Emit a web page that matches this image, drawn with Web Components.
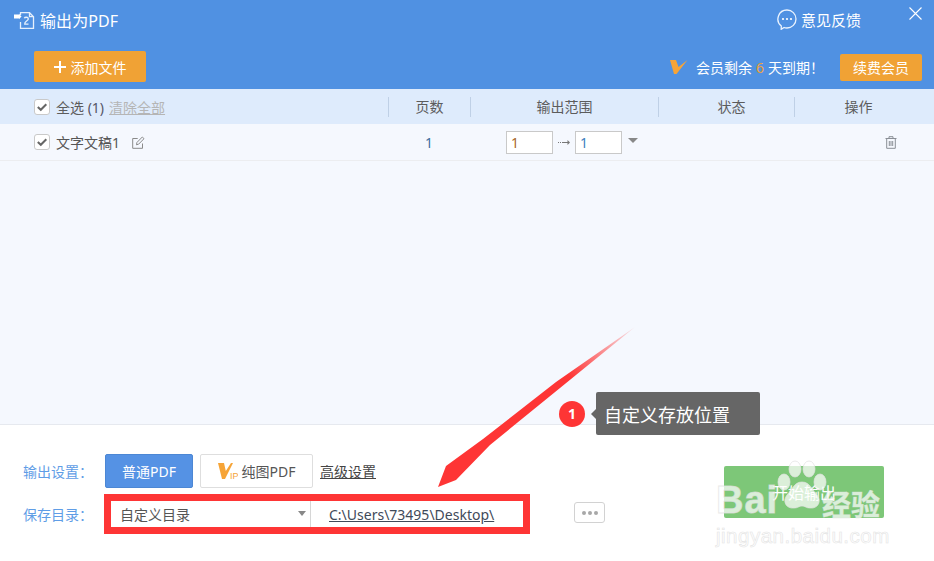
<!DOCTYPE html>
<html lang="zh"><head><meta charset="utf-8"><title>输出为PDF</title>
<style>
html,body{margin:0;padding:0}
body{width:934px;height:561px;overflow:hidden;background:#fff;font-family:"Noto Sans","Noto Sans CJK SC",sans-serif}
</style></head><body>
<pdf-window>
  <title-bar></title-bar>
  <tool-bar></tool-bar>
  <table-head></table-head>
  <file-row name="文字文稿1"></file-row>
  <empty-area></empty-area>
  <bottom-panel></bottom-panel>
  <note-overlay></note-overlay>
</pdf-window>
<script>
const FONT='"Noto Sans","Noto Sans CJK SC",sans-serif';
function def(name,html){
  customElements.define(name,class extends HTMLElement{
    connectedCallback(){
      if(this.shadowRoot)return;
      const r=this.attachShadow({mode:'open'});
      r.innerHTML=typeof html==='function'?html(this):html;
    }
  });
}
const CHECK=`<svg width="16" height="16" viewBox="0 0 16 16"><rect x=".5" y=".5" width="15" height="15" rx="2.5" fill="#fff" stroke="#c9c9c9"/><path d="M3.8 8l3 2.8L12.3 5.2" fill="none" stroke="#666" stroke-width="2"/></svg>`;
def('check-box',`<style>:host{display:block;width:16px;height:16px}svg{display:block}</style>${CHECK}`);
def('pdf-window',`<style>:host{display:flex;flex-direction:column;position:relative;width:934px;height:561px;font-family:${FONT};font-size:14px;color:#555}</style><slot></slot>`);
def('title-bar',`<style>
:host{display:flex;align-items:center;height:45px;background:#5091e2;color:#fff;padding:0 12px 6px 14px;box-sizing:border-box}
.t{font-size:16px;margin-left:4px;letter-spacing:.1px}
.fb{margin-left:auto;display:flex;align-items:center;gap:4px;font-size:15px;margin-right:48px}
svg{display:block;flex:none}
.x{margin-bottom:12px}
</style>
<svg width="22" height="20" viewBox="0 0 22 20" fill="none" stroke="#e6f0fc" stroke-width="1.3"><path d="M6.5 5V2.7h9l4 4v11.6H6.5V12"/><path d="M15.500 2.700v4h4"/><path d="M10.300 8.300c.6-1.500 3.800-1.500 4 .5.200 1.700-2.400 2-3.300 4l-.2 1.300h3.700"/><rect x="0" y="4.500" width="5" height="4" fill="#fff" stroke="none"/><path d="M5 3.800l2.500 2.700L5 9.200z" fill="#fff" stroke="none"/></svg>
<span class="t">输出为PDF</span>
<span class="fb"><svg width="20" height="21" viewBox="0 0 20 21" fill="none" stroke="#eaf3fe" stroke-width="1.3"><path d="M10 1a9 9 0 0 1 0 18c-1 0-2-.1-2.900-.5L4.200 20.300l.1-3.300A9 9 0 0 1 10 1z"/><g fill="#fff" stroke="none"><circle cx="6" cy="10" r="1.100"/><circle cx="10" cy="10" r="1.100"/><circle cx="14" cy="10" r="1.100"/></g></svg>意见反馈</span>
<svg class="x" width="13" height="13" viewBox="0 0 13 13" stroke="#fff" stroke-width="1.100"><path d="M.5.500l12 12M12.500.500l-12 12"/></svg>`);
def('tool-bar',`<style>
:host{display:flex;align-items:center;height:44px;background:#5091e2;color:#fff;padding:0 12px 0 34px;box-sizing:border-box}
.add{display:flex;align-items:center;justify-content:center;gap:5px;width:112px;height:31px;background:#f0a235;border-radius:2px;font-size:14px;margin-top:-1px}
.vip{margin-left:auto;display:flex;align-items:center;font-size:14px}
.vip b{font-weight:400;color:#f0a235;margin:0 4px}
.vip svg{margin-right:8px}
.renew{margin-left:16px;width:82px;height:27px;background:#f0a235;border-radius:2px;display:flex;align-items:center;justify-content:center;font-size:14px}
svg{display:block}
</style>
<span class="add"><svg width="12" height="12" viewBox="0 0 12 12"><path d="M6 0v12M0 6h12" stroke="#fff" stroke-width="2"/></svg>添加文件</span>
<span class="vip"><svg width="18" height="16" viewBox="0 0 18 16"><path d="M0 1h6l2.500 7L17.500 1 6.500 15H4z" fill="#f6a437"/></svg>会员剩余<b>6</b>天到期！</span>
<span class="renew">续费会员</span>`);
def('table-head',`<style>
:host{display:grid;grid-template-columns:388px 82px 188px 136px 128px;height:35px;background:#deebfc;align-items:center;box-sizing:border-box;color:#5c5c5c}
.c{height:20px;line-height:20px;text-align:center;border-left:1px solid #bfd0e6;box-sizing:border-box}
.f{display:flex;align-items:center;padding-left:34px;gap:6px}
.n{color:#556}
u{color:#b5b5b5;margin-left:-1px}
.s{padding-left:10px}
check-box{flex:none}
</style>
<div class="f"><check-box></check-box><span>全选 <span class="n">(1)</span></span><u>清除全部</u></div>
<div class="c">页数</div><div class="c">输出范围</div><div class="c s">状态</div><div class="c">操作</div>`);
def('file-row',h=>`<style>
:host{display:grid;grid-template-columns:388px 82px 188px 136px 128px;height:37px;background:#f5f8fe;align-items:center;box-sizing:border-box;border-bottom:1px solid #ecedf0;color:#555}
.f{display:flex;align-items:center;padding-left:34px}
.f span{margin-left:6px}
.f svg{margin-left:12px}
.p{text-align:center;color:#3f6f9f}
.r{display:flex;align-items:center;padding-left:36px}
.i{width:47px;height:23px;border:1px solid #c9c9c9;background:#fff;box-sizing:border-box;padding-left:4px;line-height:22px;color:#a8682c}
.i.b{color:#3f7fc0}
.r .a{width:22px;display:flex;justify-content:center}
.caret{width:0;height:0;border:5px solid transparent;border-top:5px solid #888;border-bottom:0;margin:-4px 0 0 6px}
.d{display:flex;justify-content:flex-end;padding-right:25px;grid-column:5}
svg{display:block}
check-box{flex:none}
</style>
<div class="f"><check-box></check-box><span>${h.getAttribute('name')}</span><svg width="13" height="13" viewBox="0 0 13 13" fill="none" stroke="#8a8a8a"><path d="M10.500 7.500v4.800H.7V2.500h5"/><path d="M4.500 8.800l.4-2.300L10.300 1l1.700 1.700-5.400 5.500z"/></svg></div>
<div class="p">1</div>
<div class="r"><span class="i">1</span><span class="a"><svg width="13" height="7" viewBox="0 0 13 7" stroke="#777" fill="none"><path d="M0 3.500h1M2 3.500h1M4 3.500h7"/><path d="M9.500 1l2.500 2.500L9.500 6" fill="#777" stroke="none"/></svg></span><span class="i b">1</span><span class="caret"></span></div>
<div></div>
<div class="d"><svg width="12" height="13" viewBox="0 0 12 13" fill="none" stroke="#8a8f96"><path d="M.5 2.500h11M4 2.500V.7h4v1.800M1.700 2.500v9.800h8.600V2.500M4.300 5v5M6 5v5M7.700 5v5"/></svg></div>`);
def('empty-area',`<style>:host{display:block;flex:1;background:#f5f8fe;border-bottom:1px solid #e6e9ef}</style>`);
def('pdf-btn',h=>`<style>
:host{display:flex;align-items:center;justify-content:center;height:34px;box-sizing:border-box;border-radius:2px;font-size:14px;gap:4px;
 ${h.hasAttribute('primary')?'background:#5592e4;color:#fff;border:1px solid #4c87d4;width:88px':'background:#fff;color:#555;border:1px solid #dedede;width:113px'}}
svg{display:block}
</style><slot></slot>`);
def('bottom-panel',`<style>
:host{display:flex;align-items:flex-start;height:136px;padding-top:29px;box-sizing:border-box;background:#fff;color:#555}
.l{width:530px;flex:none;padding-left:23px;box-sizing:border-box}
.row{display:flex;align-items:center}
.lb{color:#5f9de6;width:81px;flex:none;white-space:nowrap}
.gap{margin-left:7px}
u{margin-left:7px;color:#444}
.r2{margin-top:6px}
.dir{display:flex;width:426px;height:40px;box-sizing:border-box;border:7px solid #fe3535;background:#fff;align-items:center;margin-left:0}
.sel{width:200px;height:26px;border-right:1px solid #d6d6d6;box-sizing:border-box;display:flex;align-items:center;padding-left:9px;position:relative}
.sel i{position:absolute;right:4px;top:10px;width:0;height:0;border:4px solid transparent;border-top:5px solid #888;border-bottom:0}
.path{padding-left:18px;color:#3f4a5a;text-decoration:underline;white-space:nowrap}
.more{width:31px;height:21px;margin:48px 0 0 44px;flex:none;box-sizing:border-box;border:1px solid #d2d2d2;border-radius:3px;display:flex;align-items:center;justify-content:center;gap:2px}
.more i{width:4px;height:4px;border-radius:50%;background:#a8a8a8}
.go{width:160px;height:52px;margin:12px 0 0 119px;flex:none;background:#7dc778;border-radius:2px;color:#fff;font-size:16px;display:flex;align-items:center;justify-content:center}
svg{display:block}
</style>
<div class="l">
 <div class="row"><span class="lb" style="width:82px">输出设置：</span><pdf-btn primary>普通PDF</pdf-btn><pdf-btn class="gap"><svg width="20" height="18" viewBox="0 0 20 18"><path d="M0 1h6l1.800 8L13 1h2L7 17H4z" fill="#f6a437"/><text x="12" y="17" font-size="9" fill="#f6a437" font-family="Liberation Sans">IP</text></svg>纯图PDF</pdf-btn><u>高级设置</u></div>
 <div class="row r2"><span class="lb">保存目录：</span><div class="dir"><div class="sel">自定义目录<i></i></div><div class="path">C:\\Users\\73495\\Desktop\\</div></div></div>
</div>
<div class="more"><i></i><i></i><i></i></div>
<div class="go">开始输出</div>`.replace(/\\\\/g,'\\'));
def('note-overlay',`<style>
:host{display:block;position:absolute;inset:0;pointer-events:none;font-family:${FONT}}
.arrow{position:absolute;left:0;top:0}
.num{position:absolute;left:559px;top:401px;width:26px;height:26px;border-radius:50%;background:#fe3535;color:#fff;font-size:14px;font-weight:700;display:flex;align-items:center;justify-content:center;line-height:1}
.tip{position:absolute;left:596px;top:392px;width:164px;height:43px;background:#666;border-radius:2px;color:#fff;font-size:18px;display:flex;align-items:center;padding-left:8px;box-sizing:border-box;white-space:nowrap}
.tip:before{content:"";position:absolute;left:-5px;top:17px;border:5px solid transparent;border-right:5px solid #666;border-left:0}
.wm{position:absolute;left:716px;top:460px;width:170px;height:90px;color:rgba(255,255,255,.72);font-family:"Liberation Sans",sans-serif}
.bai{position:absolute;left:0;top:18px;font-size:38px;font-weight:700;line-height:44px;letter-spacing:1px;-webkit-text-stroke:1px rgba(225,225,225,.7)}
.jy{position:absolute;left:106px;top:26px;font:700 29px/34px "Noto Sans CJK SC",sans-serif;-webkit-text-stroke:.5px rgba(225,225,225,.7)}
.url{position:absolute;left:0;top:64px;font-size:20.500px;line-height:24px;letter-spacing:.5px;color:rgba(255,255,255,.9);-webkit-text-stroke:.6px #e4e4e4;white-space:nowrap}
.paw{position:absolute;left:58px;top:0}
</style>
<svg class="arrow" width="934" height="561" viewBox="0 0 934 561"><defs><linearGradient id="g" x1="635" y1="327" x2="570" y2="378" gradientUnits="userSpaceOnUse"><stop offset="0" stop-color="#fe3535" stop-opacity=".1"/><stop offset="1" stop-color="#fe3535"/></linearGradient></defs><path d="M635 327L560 388 L490 445 L456 480 L438 487 L446 466 L483 439 L556 382z" fill="url(#g)"/></svg>
<span class="num">1</span>
<div class="tip">自定义存放位置</div>
<div class="wm">
 <svg class="paw" width="56" height="54" viewBox="0 0 56 54" fill="rgba(255,255,255,.72)" stroke="rgba(225,225,225,.7)"><ellipse cx="10" cy="22" rx="6" ry="8"/><ellipse cx="21" cy="9" rx="6" ry="8"/><ellipse cx="35" cy="9" rx="6" ry="8"/><ellipse cx="46" cy="22" rx="6" ry="8"/><path d="M28 22c8 0 10 8 15 13 5 6 1 14-7 13-4 0-5-2-8-2s-4 2-8 2c-8 1-12-7-7-13 5-5 7-13 15-13z"/></svg>
 <span class="bai">Bai</span><span class="jy">经验</span>
 <span class="url">jingyan.baidu.com</span>
</div>`);
</script>
</body></html>
